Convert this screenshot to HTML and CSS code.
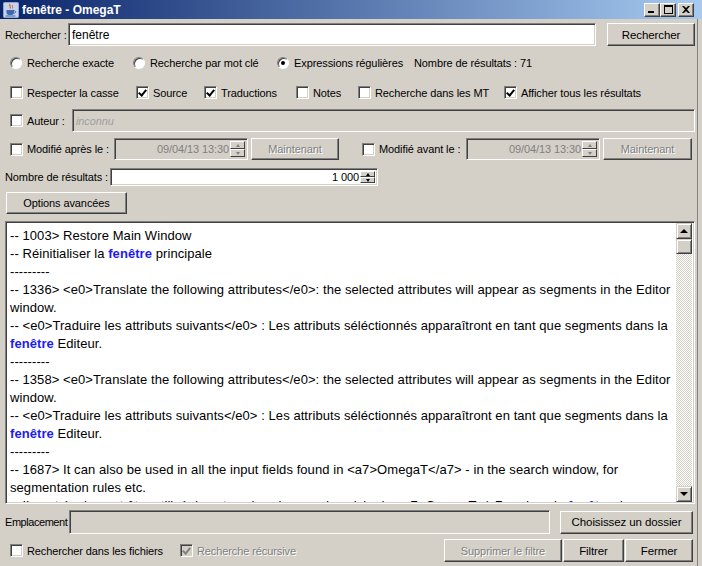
FILE: index.html
```html
<!DOCTYPE html>
<html lang="fr">
<head>
<meta charset="utf-8">
<title>fenêtre - OmegaT</title>
<link rel="stylesheet" href="styles.css">
</head>
<body>
<div class="window">
  <div class="titlebar">
    <svg class="appicon" width="16" height="16" viewBox="0 0 16 16">
      <rect x="0.5" y="0.5" width="15" height="15" rx="1" fill="#c5d3ec" stroke="#8fa6cf"/>
      <path d="M7 2 C5.5 3.5 8.5 4.5 7 6.5" fill="none" stroke="#e06010" stroke-width="1.2"/>
      <path d="M9.5 3 C8.5 4.2 10.5 4.8 9.3 6.5" fill="none" stroke="#e06010" stroke-width="1"/>
      <path d="M3.5 8 H11 V10.5 C11 12.5 9.5 13 7.3 13 C5 13 3.5 12.5 3.5 10.5 Z" fill="#3d67b0"/>
      <path d="M11 8.7 C13.3 8.7 13.3 11.2 10.8 11.2" fill="none" stroke="#3d67b0" stroke-width="1"/>
      <path d="M2.5 14 H12.5" stroke="#3d67b0" stroke-width="1"/>
    </svg>
    <span class="title">fenêtre - OmegaT</span>
    <div class="tbtns">
      <span class="tbtn"><svg width="8" height="7" viewBox="0 0 8 7"><rect x="0" y="5" width="6" height="2" fill="#000"/></svg></span>
      <span class="tbtn"><svg width="9" height="9" viewBox="0 0 9 9"><rect x="0.5" y="0.5" width="8" height="8" fill="none" stroke="#000"/><rect x="0" y="0" width="9" height="2" fill="#000"/></svg></span>
      <span class="tbtn close"><svg width="8" height="7" viewBox="0 0 8 7"><path d="M0 0 L2 0 L4 2 L6 0 L8 0 L5 3.5 L8 7 L6 7 L4 5 L2 7 L0 7 L3 3.5 Z" fill="#000"/></svg></span>
    </div>
  </div>

  <div class="content">
    <div class="row r-search">
      <span class="lbl w-rech">Rechercher :</span>
      <div class="field f-search">fenêtre</div>
      <span class="btn b-search">Rechercher</span>
    </div>

    <div class="row r-radio">
      <span class="opt w-r1"><span class="radio"></span>Recherche exacte</span>
      <span class="opt w-r2"><span class="radio"></span>Recherche par mot clé</span>
      <span class="opt w-r3"><span class="radio on"></span>Expressions régulières</span>
      <span class="opt">Nombre de résultats : 71</span>
    </div>

    <div class="row r-check">
      <span class="opt w-c1"><span class="cb"></span>Respecter la casse</span>
      <span class="opt w-c2"><span class="cb on"></span>Source</span>
      <span class="opt w-c3"><span class="cb on"></span>Traductions</span>
      <span class="opt w-c4"><span class="cb"></span>Notes</span>
      <span class="opt w-c5"><span class="cb"></span>Recherche dans les MT</span>
      <span class="opt"><span class="cb on"></span>Afficher tous les résultats</span>
    </div>

    <div class="row r-author">
      <span class="opt w-auth"><span class="cb"></span>Auteur :</span>
      <div class="field disabled f-author"><i>inconnu</i></div>
    </div>

    <div class="row r-date">
      <span class="opt w-after"><span class="cb"></span>Modifié après le :</span>
      <div class="field disabled spinner f-date">
        <span class="spin-val">09/04/13 13:30</span>
        <span class="spin"><span class="sb up dis"></span><span class="sb down dis"></span></span>
      </div>
      <span class="btn disabled b-now">Maintenant</span>
      <span class="opt w-before"><span class="cb"></span>Modifié avant le :</span>
      <div class="field disabled spinner f-date">
        <span class="spin-val">09/04/13 13:30</span>
        <span class="spin"><span class="sb up dis"></span><span class="sb down dis"></span></span>
      </div>
      <span class="btn disabled b-now2">Maintenant</span>
    </div>

    <div class="row r-count">
      <span class="lbl w-count">Nombre de résultats :</span>
      <div class="field spinner f-count">
        <span class="spin-val">1 000</span>
        <span class="spin"><span class="sb up"></span><span class="sb down"></span></span>
      </div>
    </div>

    <div class="row r-adv">
      <span class="btn b-adv">Options avancées</span>
    </div>

    <div class="textarea">
      <div class="text">
        <div class="line">-- 1003&gt; Restore Main Window</div>
        <div class="line">-- Réinitialiser la <b class="hl">fenêtre</b> principale</div>
        <div class="line">---------</div>
        <div class="line">-- 1336&gt; &lt;e0&gt;Translate the following attributes&lt;/e0&gt;: the selected attributes will appear as segments in the Editor</div>
        <div class="line">window.</div>
        <div class="line">-- &lt;e0&gt;Traduire les attributs suivants&lt;/e0&gt; : Les attributs séléctionnés apparaîtront en tant que segments dans la</div>
        <div class="line"><b class="hl">fenêtre</b> Editeur.</div>
        <div class="line">---------</div>
        <div class="line">-- 1358&gt; &lt;e0&gt;Translate the following attributes&lt;/e0&gt;: the selected attributes will appear as segments in the Editor</div>
        <div class="line">window.</div>
        <div class="line">-- &lt;e0&gt;Traduire les attributs suivants&lt;/e0&gt; : Les attributs séléctionnés apparaîtront en tant que segments dans la</div>
        <div class="line"><b class="hl">fenêtre</b> Editeur.</div>
        <div class="line">---------</div>
        <div class="line">-- 1687&gt; It can also be used in all the input fields found in &lt;a7&gt;OmegaT&lt;/a7&gt; - in the search window, for</div>
        <div class="line">segmentation rules etc.</div>
        <div class="line">-- Il peut également être utilisé dans tous les champs de saisie de &lt;a7&gt;OmegaT&lt;/a7&gt; - dans la <b class="hl">fenêtre</b> de</div>
      </div>
      <div class="vscroll">
        <span class="sbtn"><span class="tri-up"></span></span>
        <span class="thumb"></span>
        <span class="track"></span>
        <span class="sbtn"><span class="tri-down"></span></span>
      </div>
    </div>

    <div class="row r-place">
      <span class="lbl w-place">Emplacement</span>
      <div class="field disabled f-place"></div>
      <span class="btn b-folder">Choisissez un dossier</span>
    </div>

    <div class="row r-bottom">
      <span class="opt w-files"><span class="cb"></span>Rechercher dans les fichiers</span>
      <span class="opt dis-text w-rec"><span class="cb on dis"></span>Recherche récursive</span>
      <span class="btn disabled b-clear">Supprimer le filtre</span>
      <span class="btn b-filter">Filtrer</span>
      <span class="btn b-close">Fermer</span>
    </div>
  </div>
</div>
</body>
</html>
```

FILE: styles.css
```css
* { box-sizing: border-box; }
html, body { margin: 0; padding: 0; }
body {
  width: 702px;
  height: 566px;
  overflow: hidden;
  background: #d4d0c8;
  font-family: "Liberation Sans", Arial, sans-serif;
  font-size: 11px;
  letter-spacing: -0.1px;
  color: #000;
}
.window { width: 702px; height: 566px; }

/* title bar */
.titlebar {
  height: 19px;
  background: linear-gradient(to right, #0a246a, #a6caf0);
  display: flex;
  align-items: center;
  padding-left: 3px;
}
.appicon { display: block; flex: none; }
.title {
  margin-left: 3px;
  color: #fff;
  font-weight: bold;
  font-size: 12px;
  letter-spacing: 0;
  white-space: nowrap;
}
.tbtns {
  margin-left: auto;
  margin-right: 8px;
  display: flex;
  align-items: center;
}
.tbtn {
  width: 16px;
  height: 14px;
  background: #d4d0c8;
  border: 1px solid;
  border-color: #fff #404040 #404040 #fff;
  box-shadow: inset -1px -1px #808080;
  display: flex;
  align-items: center;
  justify-content: center;
}
.tbtn svg { display: block; }
.tbtn.close { margin-left: 2px; }

/* content rows */
.content {
  display: flex;
  flex-direction: column;
  width: 698px;
  height: 547px;
  border-right: 1px solid #808080;
}
.row { display: flex; align-items: center; flex: none; white-space: nowrap; }
.r-search { margin-top: 4px; height: 23px; padding-left: 5px; }
.r-radio { margin-top: 6px; height: 22px; padding-left: 10px; }
.r-check { margin-top: 7px; height: 23px; padding-left: 10px; }
.r-author { margin-top: 5px; height: 23px; padding-left: 10px; }
.r-date { margin-top: 6px; height: 22px; padding-left: 10px; }
.r-count { margin-top: 8px; height: 18px; padding-left: 5px; }
.r-adv { margin-top: 6px; height: 22px; padding-left: 6px; }
.r-place { margin-top: 6px; height: 24px; padding-left: 5px; }
.r-bottom { margin-top: 5px; height: 23px; padding-left: 10px; }

.lbl { flex: none; }
.opt { display: flex; align-items: center; flex: none; }

.w-rech { width: 63px; }
.w-r1 { width: 123px; }
.w-r2 { width: 144px; }
.w-r3 { width: 137px; }
.w-c1 { width: 126px; }
.w-c2 { width: 68px; }
.w-c3 { width: 92px; }
.w-c4 { width: 62px; }
.w-c5 { width: 146px; }
.w-auth { width: 62px; }
.w-after { width: 104px; }
.w-before { width: 104px; margin-left: 23px; }
.w-count { width: 105px; }
.w-place { width: 64px; letter-spacing: -0.45px; }
.w-files { width: 170px; }
.w-rec { width: 264px; }

/* sunken field */
.field {
  background: #fff;
  border: 1px solid;
  border-color: #808080 #fff #fff #808080;
  box-shadow: inset 1px 1px #404040, inset -1px -1px #d4d0c8;
  height: 100%;
  display: flex;
  align-items: center;
  padding-left: 3px;
  flex: none;
  overflow: hidden;
}
.field.disabled { background: #d4d0c8; color: #808080; }
.f-search { width: 528px; font-size: 12px; padding-left: 3px; letter-spacing: 0; }
.f-author { width: 623px; }
.f-author i { font-style: italic; color: #a0a0a0; }
.f-date { width: 134px; }
.f-count { width: 268px; }
.f-place { width: 481px; }

.spinner { padding: 2px; padding-left: 3px; justify-content: flex-end; }
.spin-val { flex: 1; text-align: right; padding-right: 1px; }
.f-date .spin-val { color: #808080; }
.spin { display: flex; flex-direction: column; width: 15px; height: 100%; flex: none; }
.sb {
  flex: 1;
  background: #d4d0c8;
  border: 1px solid;
  border-color: #fff #404040 #404040 #fff;
  display: flex;
  align-items: center;
  justify-content: center;
}
.sb::after {
  content: "";
  width: 0; height: 0;
  border-left: 2.5px solid transparent;
  border-right: 2.5px solid transparent;
}
.sb.up::after { border-bottom: 3px solid #000; }
.sb.down::after { border-top: 3px solid #000; }
.sb.dis.up::after { border-bottom-color: #808080; }
.sb.dis.down::after { border-top-color: #808080; }

/* raised button */
.btn {
  flex: none;
  height: 100%;
  background: #d4d0c8;
  border: 1px solid;
  border-color: #fff #404040 #404040 #fff;
  box-shadow: inset -1px -1px #808080;
  display: flex;
  align-items: center;
  justify-content: center;
  font-size: 11px;
}
.btn.disabled { color: #808080; text-shadow: 1px 1px #fff; }
.b-search { width: 88px; margin-left: 11px; font-size: 11.5px; }
.b-now { width: 88px; margin-left: 3px; }
.b-now2 { width: 89px; margin-left: 3px; }
.b-adv { width: 121px; }
.b-folder { width: 133px; margin-left: 10px; height: 23px; font-size: 11.5px; }
.b-clear { width: 118px; }
.b-filter { width: 61px; margin-left: 1px; font-size: 11.5px; }
.b-close { width: 68px; margin-left: 1px; font-size: 11.5px; }

/* radio */
.radio {
  width: 12px;
  height: 12px;
  border-radius: 50%;
  background: #fff;
  border: 1px solid;
  border-color: #808080 #fff #fff #808080;
  box-shadow: inset 1px 1px #404040;
  margin-right: 5px;
  flex: none;
  position: relative;
}
.radio.on::after {
  content: "";
  position: absolute;
  left: 3px; top: 3px;
  width: 4px; height: 4px;
  border-radius: 50%;
  background: #000;
}

/* checkbox */
.cb {
  width: 13px;
  height: 13px;
  background: #fff;
  border: 1px solid;
  border-color: #808080 #fff #fff #808080;
  box-shadow: inset 1px 1px #404040, inset -1px -1px #d4d0c8;
  margin-right: 4px;
  flex: none;
  position: relative;
}
.cb.on::after {
  content: "";
  position: absolute;
  left: 3px; top: 1px;
  width: 3px; height: 6px;
  border: solid #000;
  border-width: 0 2px 2px 0;
  transform: rotate(40deg);
}
.cb.dis { background: #d4d0c8; }
.cb.dis::after { border-color: #808080; }
.dis-text { color: #808080; text-shadow: 1px 1px #fff; }

/* text area */
.textarea {
  margin-top: 7px;
  margin-left: 5px;
  width: 690px;
  height: 283px;
  flex: none;
  background: #fff;
  border: 1px solid;
  border-color: #808080 #fff #fff #808080;
  box-shadow: inset 1px 1px #404040, inset -1px -1px #d4d0c8;
  display: flex;
  padding: 1px;
  overflow: hidden;
}
.text {
  flex: 1;
  padding: 4px 0 0 3px;
  font-size: 13px;
  letter-spacing: 0.07px;
  line-height: 18px;
  overflow: hidden;
}
.line { white-space: pre; height: 18px; }
.hl { color: #1c1cf0; font-weight: bold; }

.vscroll {
  width: 16px;
  flex: none;
  display: flex;
  flex-direction: column;
  margin-right: 1px;
}
.sbtn {
  width: 16px; height: 16px;
  flex: none;
  background: #d4d0c8;
  border: 1px solid;
  border-color: #d4d0c8 #404040 #404040 #d4d0c8;
  box-shadow: inset 1px 1px #fff, inset -1px -1px #808080;
  display: flex;
  align-items: center;
  justify-content: center;
}
.thumb {
  width: 16px; height: 15px;
  flex: none;
  background: #d4d0c8;
  border: 1px solid;
  border-color: #d4d0c8 #404040 #404040 #d4d0c8;
  box-shadow: inset 1px 1px #fff, inset -1px -1px #808080;
}
.track {
  flex: 1;
  background-color: #d4d0c8;
  background-image: repeating-conic-gradient(#fff 0 25%, #d4d0c8 0 50%);
  background-size: 2px 2px;
}
.tri-up, .tri-down {
  width: 0; height: 0;
  border-left: 4px solid transparent;
  border-right: 4px solid transparent;
}
.tri-up { border-bottom: 4px solid #000; }
.tri-down { border-top: 4px solid #000; }
```
